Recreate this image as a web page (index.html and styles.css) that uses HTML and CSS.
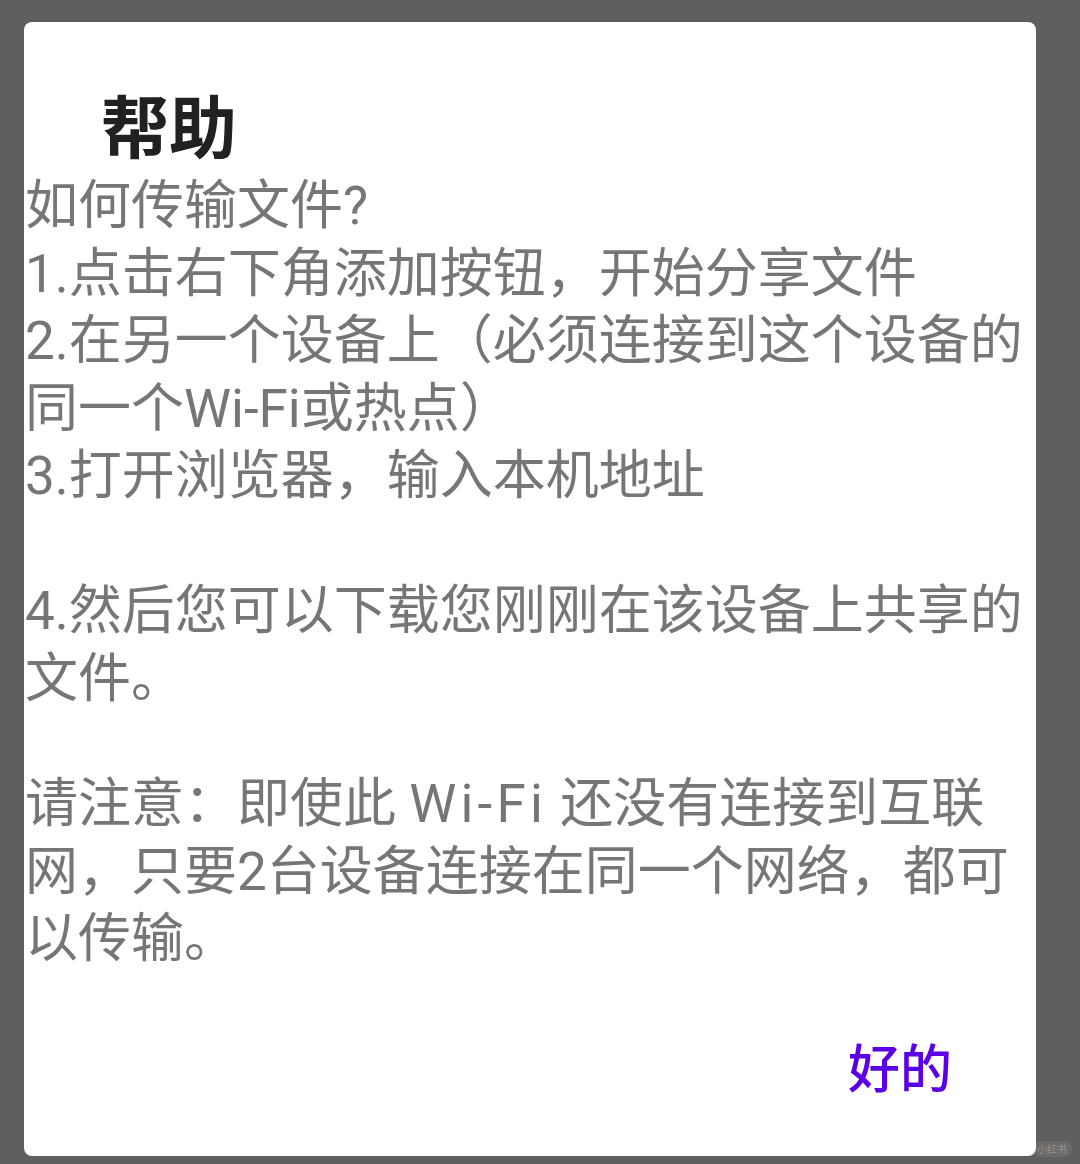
FILE: index.html
```html
<!DOCTYPE html>
<html lang="zh-CN">
<head>
<meta charset="utf-8">
<title>帮助</title>
<link rel="stylesheet" href="styles.css">
</head>
<body>
<div class="screen">
  <div class="dialog">
    <h2 class="dialog-title">帮助</h2>
    <div class="dialog-body">
      <p class="line">如何传输文件?</p>
      <p class="line">1.点击右下角添加按钮，开始分享文件</p>
      <p class="line">2.在另一个设备上（必须连接到这个设备的<br>同一个Wi-Fi或热点）</p>
      <p class="line">3.打开浏览器，输入本机地址</p>
      <p class="line gap-lg">4.然后您可以下载您刚刚在该设备上共享的<br>文件。</p>
      <p class="line gap-md">请注意：即使此 <span class="en">Wi-Fi</span> 还没有连接到互联<br>网，只要2台设备连接在同一个网络，都可<br>以传输。</p>
    </div>
    <div class="dialog-actions">
      <button class="btn-ok" type="button">好的</button>
    </div>
  </div>
  <span class="watermark">小红书</span>
</div>
</body>
</html>
```

FILE: styles.css
```css
html, body {
  margin: 0;
  padding: 0;
  background: #5f5f5f;
}

body {
  font-family: "Roboto", "Noto Sans CJK SC", sans-serif;
}

.screen {
  position: relative;
  width: 1080px;
  height: 1164px;
  padding-top: 22px;
  box-sizing: border-box;
}

.dialog {
  margin-left: 24px;
  width: 1012px;
  height: 1134px;
  background: #ffffff;
  border-radius: 8px;
  box-sizing: border-box;
  padding-top: 62px;
  display: flex;
  flex-direction: column;
}

.dialog-title {
  margin: 0 0 9px 0;
  padding-left: 77px;
  font-family: "Noto Sans CJK SC", sans-serif;
  font-size: 68px;
  line-height: 80px;
  font-weight: 700;
  color: #212121;
}

.dialog-body {
  padding-left: 1px;
  color: #767676;
  font-size: 53px;
  line-height: 67.5px;
}

.line {
  margin: 0;
}

.gap-lg {
  margin-top: 67.5px;
}

.gap-md {
  margin-top: 58px;
}

.en {
  letter-spacing: 0.08em;
}

.dialog-actions {
  display: flex;
  justify-content: flex-end;
  padding-right: 84px;
  margin-top: 58px;
}

.btn-ok {
  border: none;
  background: transparent;
  padding: 0;
  font-family: "Noto Sans CJK SC", sans-serif;
  font-size: 52px;
  line-height: 67px;
  font-weight: 500;
  color: #5b00e6;
}

.watermark {
  position: absolute;
  right: 8px;
  bottom: 7px;
  padding: 1px 5px;
  border-radius: 8px;
  background: rgba(255, 255, 255, 0.08);
  color: rgba(255, 255, 255, 0.28);
  font-family: "Noto Sans CJK SC", sans-serif;
  font-size: 10px;
  line-height: 14px;
}
```
